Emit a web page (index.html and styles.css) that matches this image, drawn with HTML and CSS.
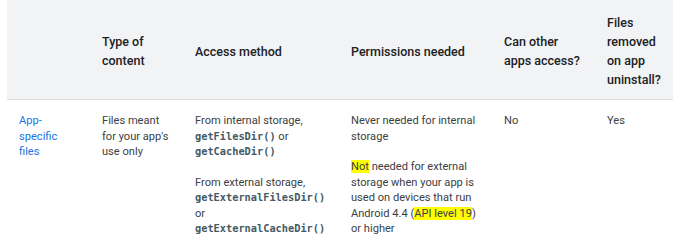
FILE: index.html
```html
<!DOCTYPE html>
<html lang="en">
<head>
  <meta charset="UTF-8" />
  <title>Storage overview</title>
  <link rel="stylesheet" href="styles.css">
</head>
<body>
  <table class="storage">
    <colgroup>
      <col class="c1"><col class="c2"><col class="c3"><col class="c4"><col class="c5"><col class="c6">
    </colgroup>
    <thead>
      <tr>
        <th></th>
        <th>Type of content</th>
        <th>Access method</th>
        <th>Permissions needed</th>
        <th>Can other apps access?</th>
        <th>Files removed on app uninstall?</th>
      </tr>
    </thead>
    <tbody>
      <tr>
        <td><a href="#">App-specific files</a></td>
        <td>Files meant for your app's use only</td>
        <td>
          <p>From internal storage, <code>getFilesDir()</code> or <code>getCacheDir()</code></p>
          <p>From external storage, <code>getExternalFilesDir()</code> or <code>getExternalCacheDir()</code></p>
        </td>
        <td>
          <p>Never needed for internal storage</p>
          <p><mark>Not</mark> needed for external storage when your app is used on devices that run Android 4.4 (<mark>API level 19</mark>) or higher</p>
        </td>
        <td>No</td>
        <td>Yes</td>
      </tr>
    </tbody>
  </table>
</body>
</html>
```

FILE: styles.css
```css
body {
  margin: 0;
  padding: 0 7px;
  font-family: Roboto, sans-serif;
  color: #202124;
  background: #fff;
}

.storage {
  border-collapse: collapse;
  table-layout: fixed;
  width: 666px;
}

.c1 { width: 83px; }
.c2 { width: 93px; }
.c3 { width: 156px; }
.c4 { width: 153px; }
.c5 { width: 103px; }
.c6 { width: 78px; }

th {
  background: #f1f3f4;
  border-bottom: 1px solid #dadce0;
  font-size: 12.5px;
  font-weight: 500;
  line-height: 19px;
  text-align: left;
  vertical-align: middle;
  padding: 13px 12px 10px;
}

td {
  font-size: 11.1px;
  line-height: 15.5px;
  vertical-align: top;
  padding: 13px 12px 0;
  color: #3c4043;
}

td p {
  margin: 0 0 15px;
}

a {
  color: #1a73e8;
  text-decoration: none;
}

code {
  font-family: "DejaVu Sans Mono", monospace;
  font-size: 10.3px;
  font-weight: bold;
  color: #455a64;
}

mark {
  background: #ffff00;
  color: inherit;
  padding: 0;
}
```
